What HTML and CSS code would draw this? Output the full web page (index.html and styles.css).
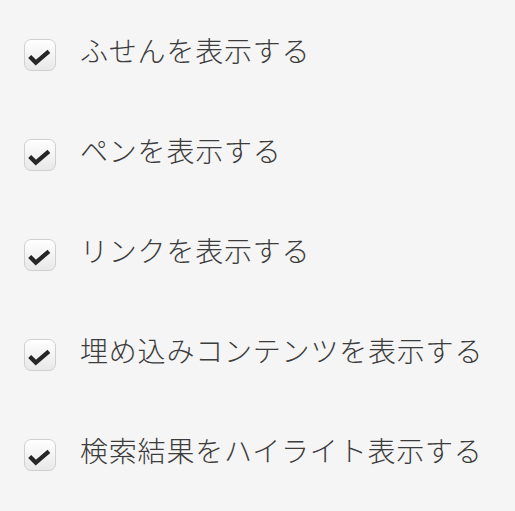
FILE: index.html
```html
<html>
    <head>
        <meta name="viewport" content="width=device-width, initial-scale=1">
        <link rel="stylesheet" href="styles.css">
    </head>
    <body>
        <div class='outer'>
            <label class='option'>
                <span class='check'><svg viewBox='0 0 32 32'><path d='M5 16.5 L11.5 23 L25.5 11'/></svg></span>
                <span class='option-text'>ふせんを表示する</span>
            </label>
            <label class='option'>
                <span class='check'><svg viewBox='0 0 32 32'><path d='M5 16.5 L11.5 23 L25.5 11'/></svg></span>
                <span class='option-text'>ペンを表示する</span>
            </label>
            <label class='option'>
                <span class='check'><svg viewBox='0 0 32 32'><path d='M5 16.5 L11.5 23 L25.5 11'/></svg></span>
                <span class='option-text'>リンクを表示する</span>
            </label>
            <label class='option'>
                <span class='check'><svg viewBox='0 0 32 32'><path d='M5 16.5 L11.5 23 L25.5 11'/></svg></span>
                <span class='option-text'>埋め込みコンテンツを表示する</span>
            </label>
            <label class='option'>
                <span class='check'><svg viewBox='0 0 32 32'><path d='M5 16.5 L11.5 23 L25.5 11'/></svg></span>
                <span class='option-text'>検索結果をハイライト表示する</span>
            </label>
        </div>
    </body>
</html>
```

FILE: styles.css
```css
body {
    margin: 0;
    background: #f5f5f5;
    font-family: "Noto Sans CJK JP", "Noto Sans", sans-serif;
    overflow: hidden;
}
.outer {
    padding-top: 5px;
    display: flex;
    flex-direction: column;
}
.option {
    height: 100px;
    display: flex;
    align-items: center;
    padding-left: 24px;
}
.check {
    width: 30px;
    height: 30px;
    border: 1px solid #d0d0d0;
    border-radius: 7px;
    background: linear-gradient(#ffffff, #e8e8e8);
    display: flex;
    align-items: center;
    justify-content: center;
    flex-shrink: 0;
}
.check svg {
    width: 30px;
    height: 30px;
    margin-top: 1px;
}
.check path {
    fill: none;
    stroke: #262626;
    stroke-width: 4.5;
    stroke-linejoin: miter;
}
.option-text {
    margin-left: 24px;
    padding-bottom: 10px;
    font-size: 28px;
    font-weight: 300;
    color: #3c3c3c;
    letter-spacing: 0.8px;
}
```
